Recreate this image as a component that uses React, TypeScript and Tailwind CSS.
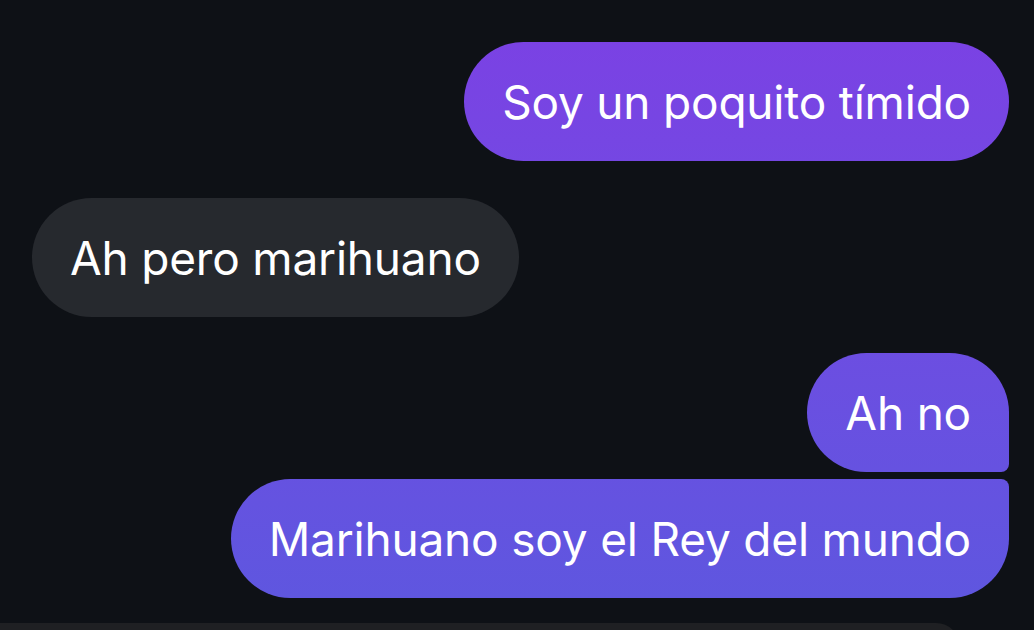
import React from 'react'

type Msg = { id: number; text: string; mine: boolean; shape: string; gapTop: string }

// Chat thread. Consecutive bubbles from the same sender share a flattened corner.
const MESSAGES: Msg[] = [
  { id: 1, text: 'Soy un poquito tímido', mine: true, shape: 'rounded-[60px]', gapTop: 'mt-[42px]' },
  { id: 2, text: 'Ah pero marihuano', mine: false, shape: 'rounded-[60px]', gapTop: 'mt-[37px]' },
  { id: 3, text: 'Ah no', mine: true, shape: 'rounded-[60px] rounded-br-[8px]', gapTop: 'mt-[36px]' },
  { id: 4, text: 'Marihuano soy el Rey del mundo', mine: true, shape: 'rounded-[60px] rounded-tr-[8px]', gapTop: 'mt-[7px]' },
]

function Bubble({ m }: { m: Msg }) {
  return (
    <div className={`flex ${m.mine ? 'justify-end pr-[25px]' : 'justify-start pl-[32px]'} ${m.gapTop}`}>
      <div
        className={`h-[119px] flex items-center px-[38px] text-[46px] leading-none tracking-[-0.2px] text-white ${m.shape} ${
          m.mine ? 'bg-fixed bg-linear-to-b from-[#7c40e4] to-[#5d57df]' : 'bg-[#26292e]'
        }`}
      >
        {m.text}
      </div>
    </div>
  )
}

export default function App() {
  return (
    <div
      className="w-[1034px] h-[630px] overflow-hidden bg-[#0e1116] flex flex-col"
      style={{ fontFamily: 'Inter, "Noto Sans", sans-serif' }}
    >
      <div className="flex flex-col">
        {MESSAGES.map((m) => (
          <Bubble key={m.id} m={m} />
        ))}
      </div>
      {/* composer bar peeking in at the bottom */}
      <div className="mt-[25px] w-[960px] h-[40px] bg-[#1f2023] rounded-tr-[24px] shrink-0" />
    </div>
  )
}
